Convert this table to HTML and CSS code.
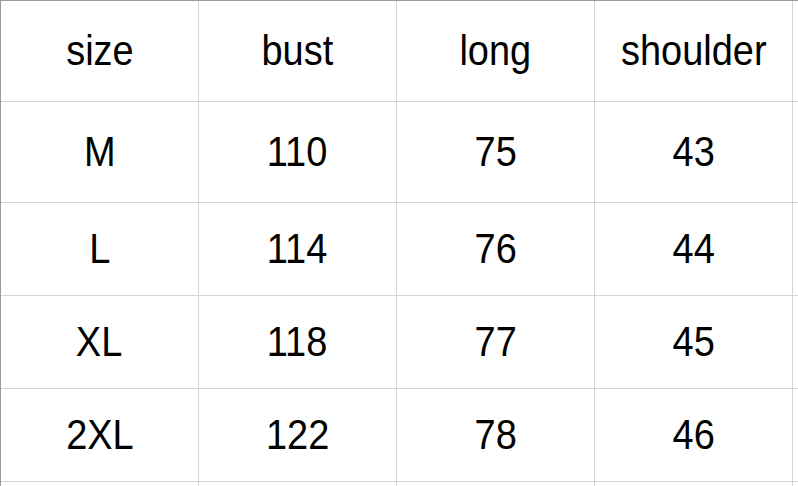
FILE: index.html
```html
<!DOCTYPE html>
<html>
<head>
<meta charset="utf-8">
<link rel="stylesheet" href="styles.css">
</head>
<body>
<div class="sheet">
  <div class="cell"><span class="txt">size</span></div><div class="cell"><span class="txt">bust</span></div><div class="cell"><span class="txt">long</span></div><div class="cell"><span class="txt">shoulder</span></div><div class="cell"></div>
  <div class="cell"><span class="txt">M</span></div><div class="cell"><span class="txt">110</span></div><div class="cell"><span class="txt">75</span></div><div class="cell"><span class="txt">43</span></div><div class="cell"></div>
  <div class="cell"><span class="txt">L</span></div><div class="cell"><span class="txt">114</span></div><div class="cell"><span class="txt">76</span></div><div class="cell"><span class="txt">44</span></div><div class="cell"></div>
  <div class="cell"><span class="txt">XL</span></div><div class="cell"><span class="txt">118</span></div><div class="cell"><span class="txt">77</span></div><div class="cell"><span class="txt">45</span></div><div class="cell"></div>
  <div class="cell"><span class="txt">2XL</span></div><div class="cell"><span class="txt">122</span></div><div class="cell"><span class="txt">78</span></div><div class="cell"><span class="txt">46</span></div><div class="cell"></div>
  <div class="cell"></div><div class="cell"></div><div class="cell"></div><div class="cell"></div><div class="cell"></div>
</div>
</body>
</html>
```
FILE: styles.css
```css
html, body {
  margin: 0;
  padding: 0;
  background: #ffffff;
  overflow: hidden;
}
.sheet {
  display: grid;
  grid-template-columns: 197px 197px 197px 197px 5px;
  grid-template-rows: 100px 100px 92px 92px 92px 4px;
  gap: 1px;
  background: #d4d4d4;
  border-top: 1px solid #9b9b9b;
  border-left: 1px solid #9b9b9b;
  width: 797px;
  height: 485px;
  overflow: hidden;
}
.cell {
  background: #ffffff;
  display: flex;
  align-items: center;
  justify-content: center;
  font-family: "Liberation Sans", Arial, sans-serif;
  font-size: 42.67px;
  color: #000000;
  line-height: 1.15;
  overflow: hidden;
}
.txt {
  display: inline-block;
  transform: scaleX(0.89);
  white-space: nowrap;
}
```
